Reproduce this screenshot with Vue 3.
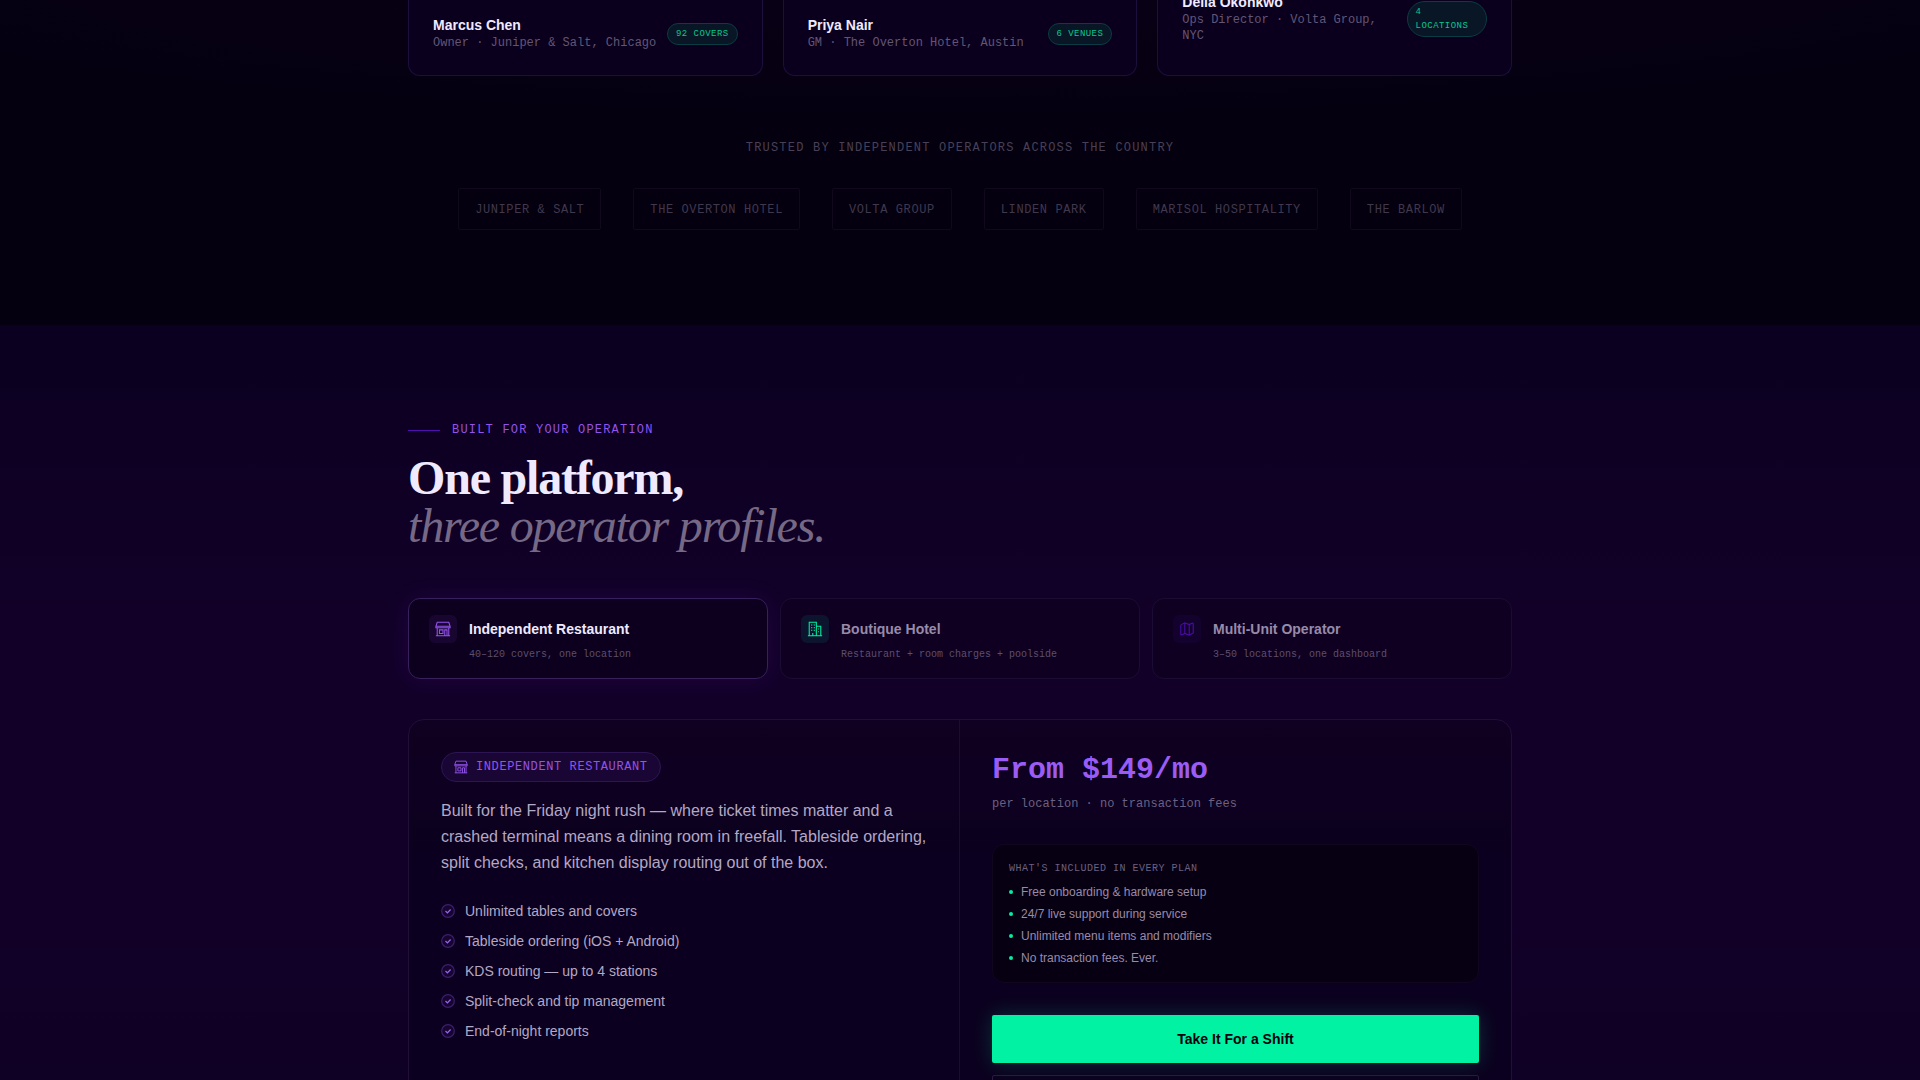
<script setup>
import { computed, ref } from 'vue'

const testimonials = [
  { name: 'Marcus Chen', role: 'Owner · Juniper & Salt, Chicago', badge: '92 COVERS' },
  { name: 'Priya Nair', role: 'GM · The Overton Hotel, Austin', badge: '6 VENUES' },
  { name: 'Delia Okonkwo', role: 'Ops Director · Volta Group, NYC', badge: '4 LOCATIONS', tall: true },
]

const logos = [
  'Juniper & Salt',
  'The Overton Hotel',
  'Volta Group',
  'Linden Park',
  'Marisol Hospitality',
  'The Barlow',
]

const profiles = [
  {
    id: 'restaurant',
    name: 'Independent Restaurant',
    sub: '40–120 covers, one location',
    price: 'From $149/mo',
    note: 'per location · no transaction fees',
    text: 'Built for the Friday night rush — where ticket times matter and a crashed terminal means a dining room in freefall. Tableside ordering, split checks, and kitchen display routing out of the box.',
    features: [
      'Unlimited tables and covers',
      'Tableside ordering (iOS + Android)',
      'KDS routing — up to 4 stations',
      'Split-check and tip management',
      'End-of-night reports',
    ],
  },
  { id: 'hotel', name: 'Boutique Hotel', sub: 'Restaurant + room charges + poolside' },
  { id: 'multi', name: 'Multi-Unit Operator', sub: '3–50 locations, one dashboard' },
]

const included = [
  'Free onboarding & hardware setup',
  '24/7 live support during service',
  'Unlimited menu items and modifiers',
  'No transaction fees. Ever.',
]

const icons = {
  restaurant:
    'M3.5 2.5h13l1.5 4.5v1.5h-16V7zM2 7h16M3.5 8.5v9M16.5 8.5v9M2 17.5h16M6 11h4v4H6zM12 17.5V11h2.5v6.5',
  hotel:
    'M3.5 17.5v-15h8v15M11.5 7h5v10.5M2 17.5h16M5.5 5.5h1.5M8.5 5.5h1.5M5.5 8.5h1.5M8.5 8.5h1.5M5.5 11.5h1.5M8.5 11.5h1.5M7.5 17.5v-3M13.5 10h1M13.5 13h1',
  multi:
    'M4.5 4.5 7.5 3l5 2L15.5 3.500Q17 3 17 4.500V14.500L12.500 17l-5-2L4.500 16.500Q3 17 3 15.500V6Q3 5.200 4.500 4.500zM7.500 3v12M12.500 5v12',
}

const activeId = ref('restaurant')
const shown = computed(() => ({ ...profiles[0], ...profiles.find((p) => p.id === activeId.value) }))
</script>

<template>
  <main class="page">
    <section class="proof">
      <div class="container">
        <div class="cards">
          <article v-for="t in testimonials" :key="t.name" class="card" :class="{ tall: t.tall }">
            <div class="author">
              <div>
                <div class="author-name">{{ t.name }}</div>
                <div class="author-role">{{ t.role }}</div>
              </div>
              <span class="badge">{{ t.badge }}</span>
            </div>
          </article>
        </div>
        <p class="trusted">Trusted by independent operators across the country</p>
        <ul class="logos">
          <li v-for="logo in logos" :key="logo">{{ logo }}</li>
        </ul>
      </div>
    </section>

    <section class="profiles">
      <div class="container">
        <div class="eyebrow">Built for your operation</div>
        <h2>One platform,<br /><em>three operator profiles.</em></h2>

        <div class="tabs">
          <button
            v-for="p in profiles"
            :key="p.id"
            type="button"
            class="tab"
            :class="[p.id, { active: p.id === activeId }]"
            @click="activeId = p.id"
          >
            <span class="tab-head">
              <span class="tab-icon">
                <svg viewBox="1 1 18 18" width="16" height="16"><path :d="icons[p.id]" /></svg>
              </span>
              <span class="tab-name">{{ p.name }}</span>
            </span>
            <span class="tab-sub">{{ p.sub }}</span>
          </button>
        </div>

        <div class="panel">
          <div class="panel-left">
            <div class="pill">
              <svg viewBox="1 1 18 18" width="14" height="14"><path :d="icons[shown.id]" /></svg>
              {{ shown.name }}
            </div>
            <p class="desc">{{ shown.text }}</p>
            <ul class="features">
              <li v-for="f in shown.features" :key="f">
                <svg viewBox="0 0 14 14" width="14" height="14">
                  <circle cx="7" cy="7" r="6.3" />
                  <path d="M4.5 7 6.4 8.900 9.600 5.500" />
                </svg>
                {{ f }}
              </li>
            </ul>
          </div>
          <div class="panel-right">
            <div class="price">{{ shown.price }}</div>
            <div class="note">{{ shown.note }}</div>
            <div class="included">
              <h3>What's included in every plan</h3>
              <ul>
                <li v-for="i in included" :key="i">{{ i }}</li>
              </ul>
            </div>
            <button type="button" class="primary">Take It For a Shift</button>
            <button type="button" class="secondary" aria-label="Pricing"></button>
          </div>
        </div>
      </div>
    </section>
  </main>
</template>

<style>
body {
  margin: 0;
  background: #0a0020;
}
</style>

<style scoped>
.page {
  height: 100vh;
  overflow: hidden;
  font-family: 'Liberation Sans', Arial, sans-serif;
  color: #f0eaff;
}
.container {
  max-width: 1104px;
  margin: 0 auto;
  padding: 0 48px;
}
ul {
  list-style: none;
  margin: 0;
  padding: 0;
}
svg {
  flex: none;
  fill: none;
  stroke: currentColor;
  stroke-width: 1.2;
}

/* testimonials */
.proof {
  background: radial-gradient(ellipse 70% 160px at 50% 0, #0a0016, #040010);
  padding-bottom: 95px;
}
.cards {
  display: grid;
  grid-template-columns: repeat(3, 1fr);
  gap: 20px;
  margin-top: -24px;
}
.card {
  display: flex;
  flex-direction: column;
  justify-content: flex-end;
  box-sizing: border-box;
  min-height: 100px;
  padding: 0 24px;
  padding-bottom: 24px;
  border: 1px solid #1d0f3b;
  border-top: 0;
  border-radius: 0 0 12px 12px;
  background: #0a001e;
}
.card.tall {
  padding-bottom: 31px;
}
.author {
  display: flex;
  align-items: center;
  justify-content: space-between;
  gap: 8px;
}
.author-name {
  font-size: 14px;
  font-weight: 700;
  line-height: 16px;
}
.author-role {
  margin-top: 2px;
  font-family: 'Liberation Mono', monospace;
  font-size: 12px;
  line-height: 16px;
  color: #625674;
}
.badge {
  padding: 3px 8px;
  border: 1px solid #0b3b43;
  border-radius: 20px;
  background: #091626;
  font-family: 'Liberation Mono', monospace;
  font-size: 9px;
  letter-spacing: 0.05em;
  line-height: 14px;
  color: #08c78e;
}
.trusted {
  margin: 62px 0 30px;
  font-family: 'Liberation Mono', monospace;
  font-size: 12px;
  letter-spacing: 0.1em;
  line-height: 20px;
  text-align: center;
  text-transform: uppercase;
  color: #484056;
}
.logos {
  display: flex;
  flex-wrap: wrap;
  justify-content: center;
  gap: 32px;
}
.logos li {
  padding: 11px 16px 9px;
  border: 1px solid #0f091b;
  border-radius: 2px;
  font-family: 'Liberation Mono', monospace;
  font-size: 12px;
  letter-spacing: 0.05em;
  line-height: 20px;
  text-transform: uppercase;
  color: #40384d;
}

/* operator profiles */
.profiles {
  padding: 95px 0 96px;
  background: linear-gradient(180deg, #0b0020 0, #130029 320px, #130029 560px, #0d0022 900px);
}
.eyebrow {
  display: flex;
  align-items: center;
  gap: 12px;
  font-family: 'Liberation Mono', monospace;
  font-size: 12px;
  letter-spacing: 0.1em;
  line-height: 20px;
  text-transform: uppercase;
  color: #9353ec;
}
.eyebrow::before {
  content: '';
  width: 32px;
  height: 1px;
  background: #5010b0;
}
h2 {
  margin: 14px 0 48px;
  font-family: 'Liberation Serif', 'Times New Roman', serif;
  font-size: 48px;
  font-weight: 700;
  letter-spacing: -0.025em;
  line-height: 48px;
}
h2 em {
  font-weight: 400;
  color: #766986;
}
.tabs {
  display: grid;
  grid-template-columns: repeat(3, 1fr);
  gap: 12px;
  margin-bottom: 40px;
}
.tab {
  padding: 16px 20px 15px;
  border: 1px solid #1b0c34;
  border-radius: 12px;
  background: #0f0022;
  font: inherit;
  text-align: left;
  color: #978ba9;
  cursor: pointer;
}
.tab.active {
  border-color: #37205c;
  background: #0c001e;
  box-shadow: 0 0 24px rgba(123, 47, 255, 0.1);
  color: #f0eaff;
}
.tab-head {
  display: flex;
  align-items: center;
  gap: 12px;
}
.tab-icon {
  display: grid;
  place-items: center;
  width: 28px;
  height: 28px;
  border-radius: 6px;
  background: #180630;
  color: #9353ec;
}
.hotel .tab-icon {
  background: #0d142e;
  color: #00f0a0;
}
.multi .tab-icon {
  background: #14022e;
  color: #4a0ca8;
}
.tab-name {
  font-size: 14px;
  font-weight: 700;
}
.tab-sub {
  display: block;
  margin-top: 4px;
  padding-left: 40px;
  font-family: 'Liberation Mono', monospace;
  font-size: 10px;
  line-height: 16px;
  color: #5b4f6c;
}
.panel {
  display: grid;
  grid-template-columns: 1fr 1fr;
  border: 1px solid #210f38;
  border-radius: 16px;
  background: linear-gradient(180deg, #100021 0, #0b001f 160px, #0c001f 100%);
}
.panel-left,
.panel-right {
  padding: 32px;
}
.panel-left {
  border-right: 1px solid #1b0d30;
}
.pill {
  display: inline-flex;
  align-items: center;
  gap: 8px;
  padding: 4px 12px;
  border: 1px solid #2d1554;
  border-radius: 20px;
  background: #1a0635;
  font-family: 'Liberation Mono', monospace;
  font-size: 12px;
  letter-spacing: 0.05em;
  line-height: 20px;
  text-transform: uppercase;
  color: #9353ec;
}
.desc {
  margin: 16px 0 20px;
  font-size: 16px;
  line-height: 26px;
  color: #b3a8c5;
}
.features li {
  display: flex;
  align-items: center;
  gap: 10px;
  font-size: 14px;
  line-height: 30px;
  color: #b3a8c5;
}
.features circle {
  fill: #150530;
  stroke: #3c1e6b;
}
.features path {
  stroke: #9a63ec;
  stroke-width: 1.3;
}
.price {
  font-family: 'Liberation Mono', monospace;
  font-size: 30px;
  font-weight: 700;
  line-height: 36px;
  color: #9b5cf6;
}
.note {
  margin-top: 6px;
  font-family: 'Liberation Mono', monospace;
  font-size: 12px;
  line-height: 20px;
  color: #6c6080;
}
.included {
  margin: 30px 0 32px;
  padding: 16px;
  border: 1px solid #12061f;
  border-radius: 12px;
  background: #070013;
}
.included h3 {
  margin: 0 0 7px;
  font-family: 'Liberation Mono', monospace;
  font-size: 10px;
  font-weight: 400;
  letter-spacing: 0.05em;
  line-height: 16px;
  text-transform: uppercase;
  color: #6c6080;
}
.included ul {
  display: grid;
  gap: 6px;
}
.included li {
  display: flex;
  align-items: center;
  gap: 8px;
  font-size: 12px;
  line-height: 16px;
  color: #978ba9;
}
.included li::before {
  content: '';
  width: 4px;
  height: 4px;
  border-radius: 50%;
  background: #00f0a0;
}
.primary,
.secondary {
  display: block;
  width: 100%;
  height: 48px;
  border: 0;
  border-radius: 2px;
  font: inherit;
  font-size: 14px;
  font-weight: 700;
  cursor: pointer;
}
.primary {
  background: #00f2a2;
  box-shadow: 0 0 20px rgba(0, 242, 162, 0.2);
  color: #05000f;
}
.secondary {
  margin-top: 12px;
  border: 1px solid #2a1a40;
  background: transparent;
}
</style>
